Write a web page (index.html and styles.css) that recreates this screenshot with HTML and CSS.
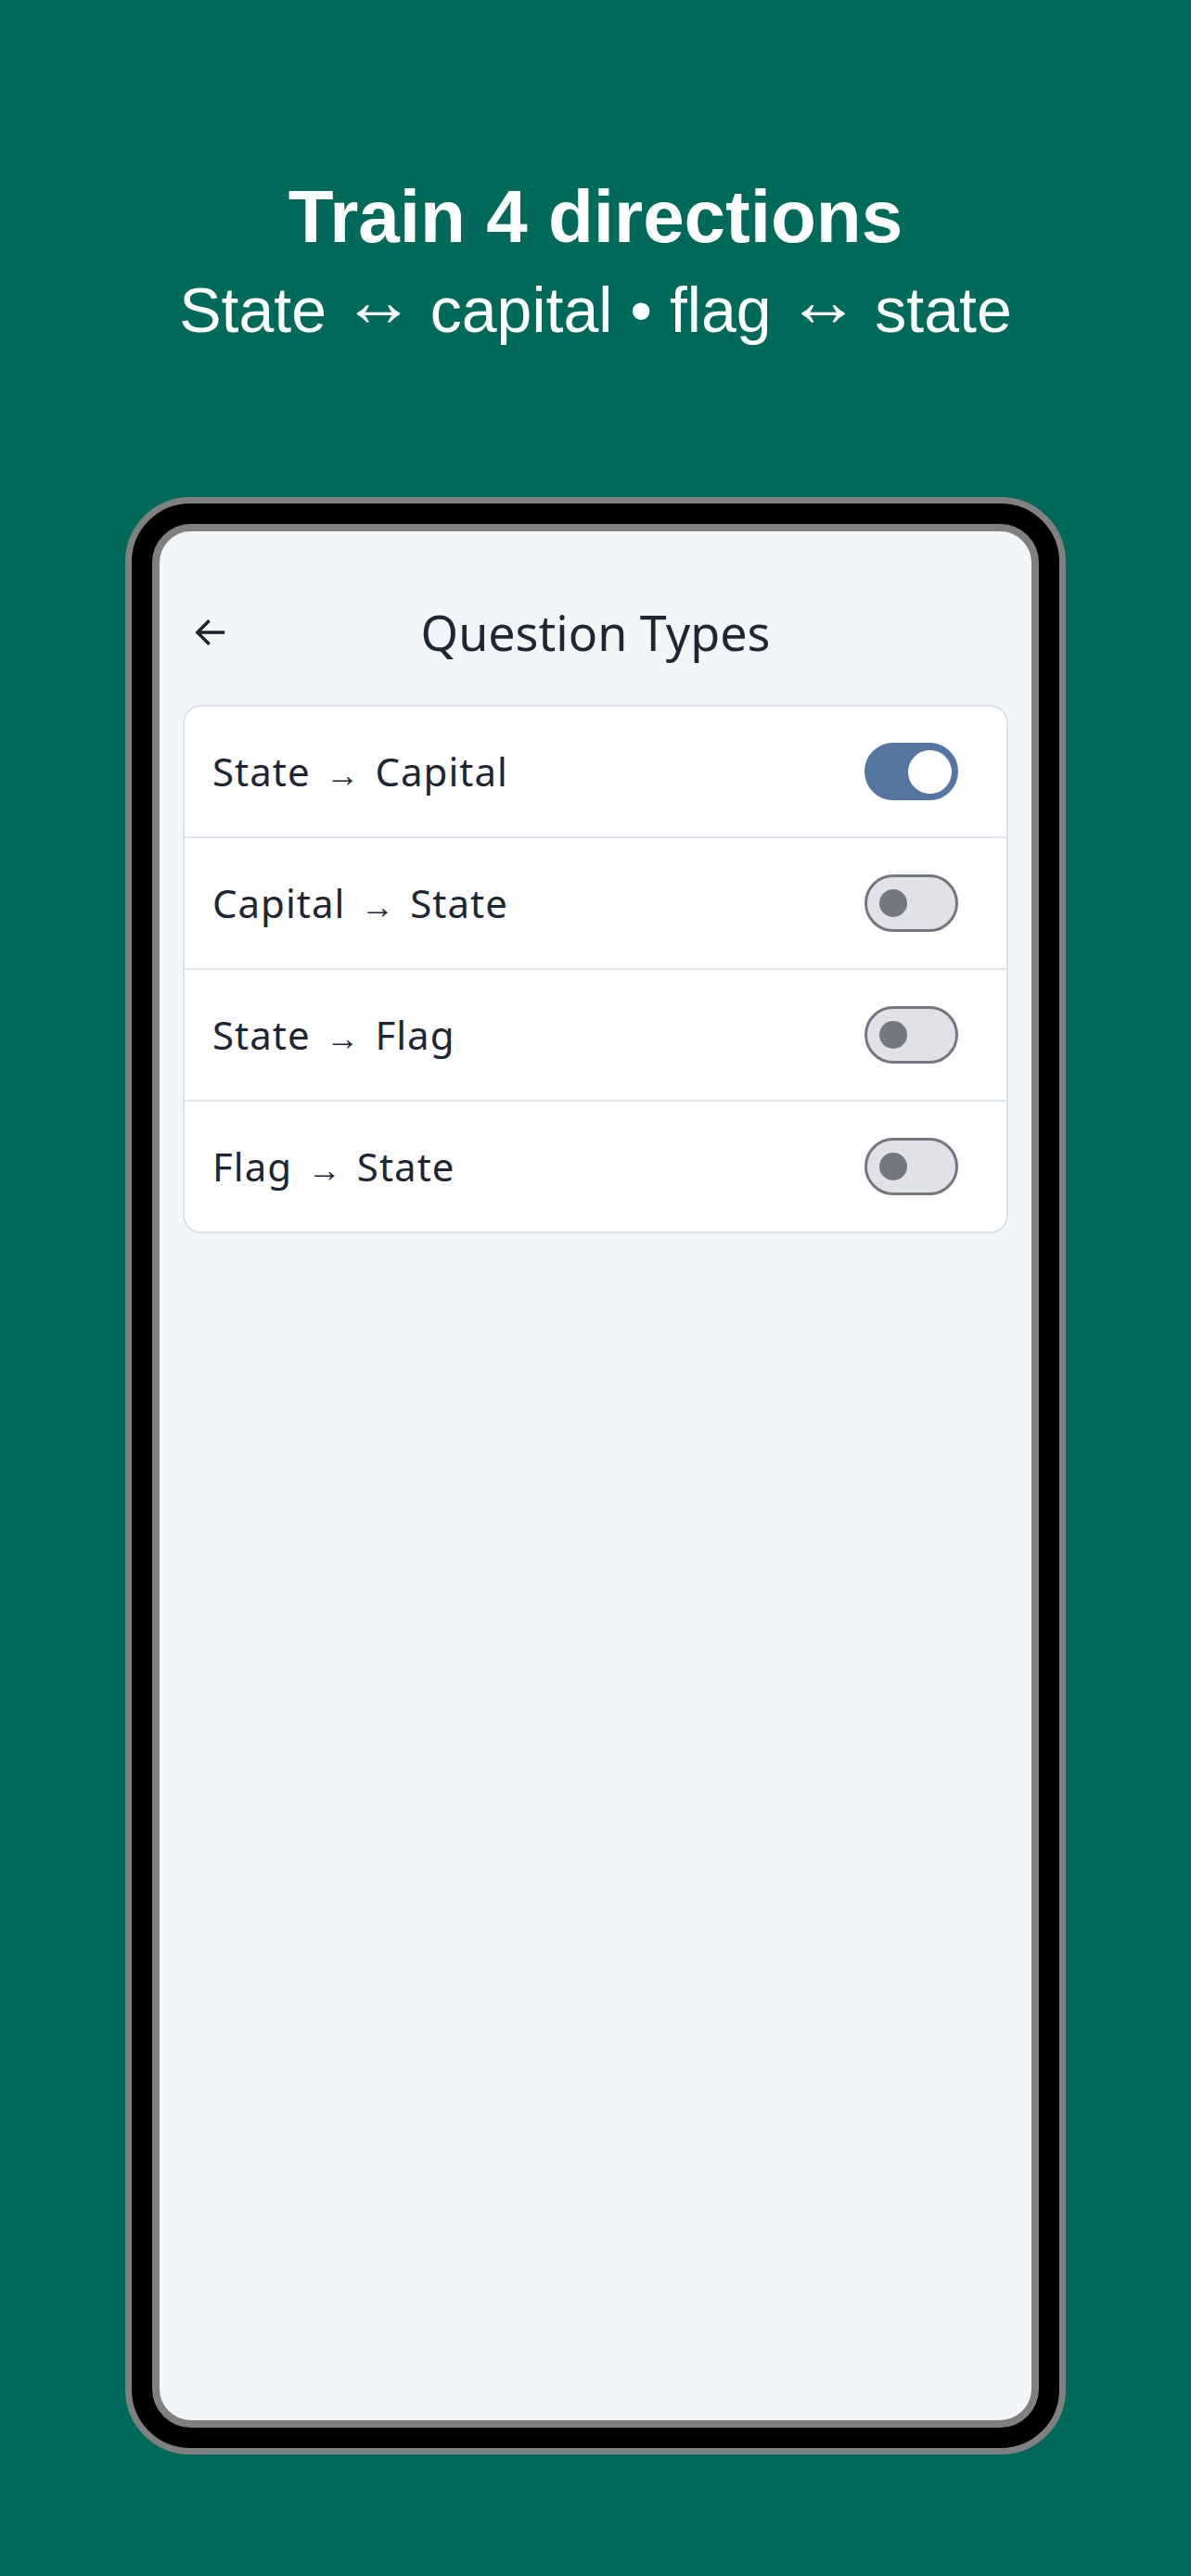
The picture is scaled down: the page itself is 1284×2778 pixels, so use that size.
FILE: index.html
```html
<!DOCTYPE html>
<html lang="en">
<head>
<meta charset="utf-8">
<title>Train 4 directions</title>
<link rel="stylesheet" href="styles.css">
</head>
<body>
<div class="page">
  <header class="hero">
    <h1 class="hero-title">Train 4 directions</h1>
    <p class="hero-sub">State <span class="sub-arr">↔</span> capital • flag <span class="sub-arr">↔</span> state</p>
  </header>
  <div class="phone">
    <div class="screen">
      <div class="appbar">
        <div class="back">
          <svg width="48" height="48" viewBox="0 0 24 24"><path d="M19.6 12H5.4M11.3 5.6 4.9 12l6.4 6.4" fill="none" stroke="#1d232b" stroke-width="1.7" stroke-linecap="butt" stroke-linejoin="miter"/></svg>
        </div>
        <div class="appbar-title">Question Types</div>
        <div class="appbar-spacer"></div>
      </div>
      <div class="card">
        <div class="row">
          <span class="label">State <span class="arr">→</span> Capital</span>
          <span class="switch on"><span class="knob"></span></span>
        </div>
        <div class="row">
          <span class="label">Capital <span class="arr">→</span> State</span>
          <span class="switch"><span class="knob"></span></span>
        </div>
        <div class="row">
          <span class="label">State <span class="arr">→</span> Flag</span>
          <span class="switch"><span class="knob"></span></span>
        </div>
        <div class="row">
          <span class="label">Flag <span class="arr">→</span> State</span>
          <span class="switch"><span class="knob"></span></span>
        </div>
      </div>
    </div>
  </div>
</div>
</body>
</html>
```
FILE: styles.css
```css
html, body {
  margin: 0;
  padding: 0;
}
body {
  background: #006a5a;
  width: 1284px;
  height: 2778px;
  overflow: hidden;
}
.page {
  display: flex;
  flex-direction: column;
  align-items: center;
}
.hero {
  padding-top: 188px;
  text-align: center;
  color: #ffffff;
  font-family: "Liberation Sans", Arial, sans-serif;
}
.hero-title {
  margin: 0;
  font-size: 80px;
  line-height: 92px;
  font-weight: 700;
}
.hero-sub {
  margin: 6px 0 0;
  font-size: 68px;
  line-height: 96px;
  font-weight: 400;
}
.sub-arr {
  font-size: 78px;
  line-height: 0;
  vertical-align: 7px;
  margin: 0 -2px;
}
.phone {
  margin-top: 154px;
  width: 1014px;
  height: 2111px;
  box-sizing: border-box;
  border: 7px solid #808080;
  border-radius: 70px;
  background: #000000;
  padding: 22px;
}
.screen {
  box-sizing: border-box;
  height: 100%;
  border: 8px solid #808080;
  border-radius: 42px;
  background: #f3f6f9;
  font-family: "Noto Sans", "Open Sans", sans-serif;
  color: #1d2733;
  overflow: hidden;
}
.appbar {
  display: flex;
  align-items: center;
  padding: 73px 31px 0;
  height: 72px;
}
.back, .appbar-spacer {
  width: 48px;
  height: 48px;
  flex: none;
}
.back svg {
  display: block;
}
.appbar-title {
  flex: 1;
  text-align: center;
  font-size: 52px;
  line-height: 72px;
  color: #1d2733;
}
.card {
  margin: 42px 25px 0;
  background: #ffffff;
  border: 2px solid #dae1e8;
  border-radius: 20px;
  overflow: hidden;
}
.row {
  height: 140px;
  display: flex;
  align-items: center;
  justify-content: space-between;
  padding: 0 52px 0 30px;
}
.row + .row {
  border-top: 2px solid #dde3ea;
}
.label {
  font-size: 42px;
  line-height: 58px;
  letter-spacing: 1px;
  color: #1d2733;
}
.arr {
  font-family: "Liberation Sans", sans-serif;
  font-size: 36px;
  line-height: 0;
  letter-spacing: 0;
  margin: 0 5px;
}
.switch {
  box-sizing: border-box;
  width: 101px;
  height: 62px;
  border-radius: 31px;
  border: 3px solid #74777f;
  background: #e1e2e8;
  display: flex;
  align-items: center;
  padding-left: 13px;
}
.switch .knob {
  width: 30px;
  height: 30px;
  border-radius: 50%;
  background: #74777f;
}
.switch.on {
  border-color: #55769e;
  background: #55769e;
  justify-content: flex-end;
  padding: 0 4px 0 0;
}
.switch.on .knob {
  width: 47px;
  height: 47px;
  background: #ffffff;
}
```
